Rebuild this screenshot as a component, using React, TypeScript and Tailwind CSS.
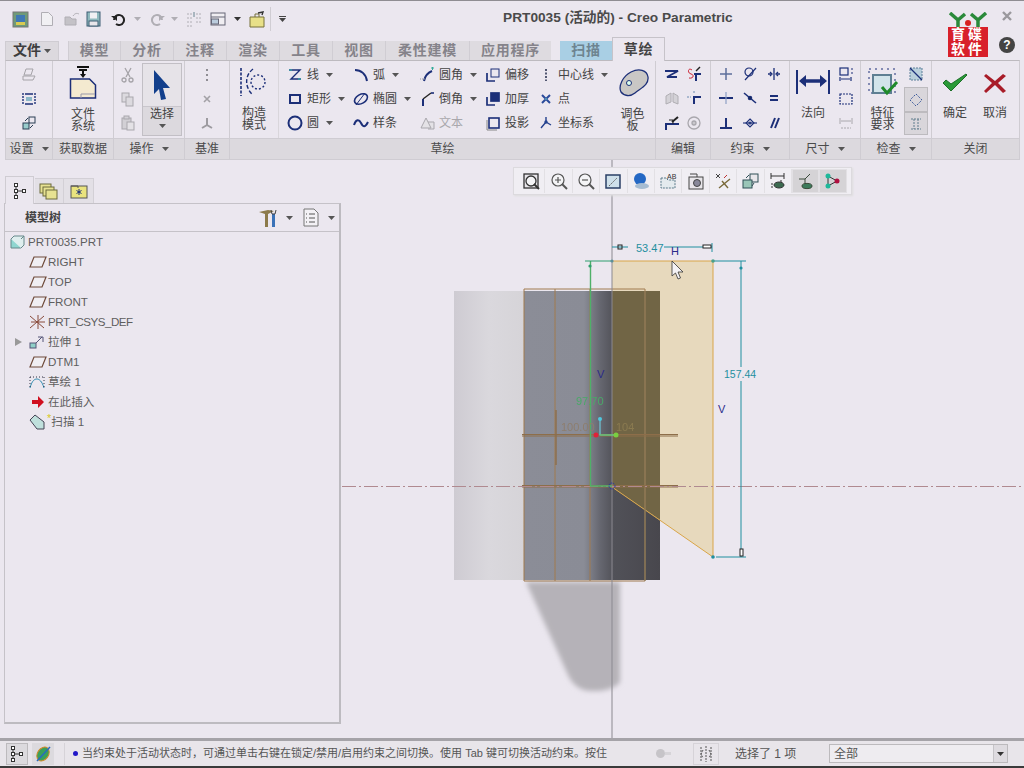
import type { ReactNode } from "react";

const NAVY = "#1c2f78";

function Ic({ w = 16, h = 16, children }: { w?: number; h?: number; children: ReactNode }) {
  return (
    <svg width={w} height={h} viewBox={`0 0 ${w} ${h}`} fill="none" className="shrink-0">
      {children}
    </svg>
  );
}

function Caret({ color = "#555" }: { color?: string }) {
  return (
    <svg width="7" height="4" viewBox="0 0 7 4" className="shrink-0">
      <path d="M0 0h7L3.5 4z" fill={color} />
    </svg>
  );
}

// ribbon icons, small 16x16
const icons: Record<string, ReactNode> = {
  print: <g stroke="#a5a3a8"><path d="M5 2h7l-2 6H3zM2 9h12l-2 4H2z" /></g>,
  fit: <g><path d="M2 2v12M14 2v12" stroke={NAVY} strokeDasharray="2 1" strokeWidth="1.4" /><path d="M4 3h8M4 13h8" stroke={NAVY} strokeWidth="1.4" /><rect x="5" y="6" width="6" height="4" fill="#8cb8c8" /></g>,
  swap: <g stroke="#2a3f55"><rect x="8" y="2" width="6" height="6" /><rect x="2" y="8" width="6" height="6" fill="#9cc" /><path d="M4 6l3-3M12 10l-3 3" /></g>,
  cut: <g stroke="#a5a3a8" strokeWidth="1.3"><path d="M5 1l5 9M11 1L6 10" /><circle cx="4" cy="13" r="2" /><circle cx="11" cy="13" r="2" /></g>,
  copy: <g stroke="#a9a7ad" fill="#dcdadf"><rect x="2" y="2" width="7" height="9" /><rect x="6" y="6" width="7" height="9" /></g>,
  paste: <g stroke="#a9a7ad" fill="#d2d0d5"><rect x="2" y="3" width="9" height="11" /><rect x="7" y="7" width="7" height="8" fill="#e4e2e6" /><rect x="4" y="1" width="5" height="3" /></g>,
  dots: <path d="M8 2v12" stroke="#8f8d93" strokeWidth="2" strokeDasharray="2 3" />,
  xsmall: <path d="M5 5l6 6M11 5l-6 6" stroke="#a3a1a6" strokeWidth="1.6" />,
  axes: <path d="M8 3v7M8 10l5 3M8 10l-5 3" stroke="#9d9ba0" strokeWidth="2" />,
  line: <g stroke={NAVY} strokeWidth="1.4"><path d="M2 3h11L4 12h10" /><path d="M2 3l3 0M14 12l-3 0" stroke="#3a9aa8" /></g>,
  arc: <path d="M2 3c6 0 11 4 12 11" stroke={NAVY} strokeWidth="2" />,
  fillet: <g><path d="M5 14c1-5 3-8 8-10" stroke={NAVY} strokeWidth="2" /><path d="M12 1h3M13.5 0v3" stroke="#3a9" /><path d="M1 12h6" stroke="#999" strokeDasharray="1 1" /></g>,
  rect: <rect x="3" y="4" width="10" height="8" stroke={NAVY} strokeWidth="2" />,
  ellipse: <g><ellipse cx="8" cy="8" rx="7" ry="4.5" transform="rotate(-30 8 8)" stroke={NAVY} strokeWidth="1.6" /><path d="M3 14L12 2" stroke={NAVY} strokeWidth="1" /></g>,
  chamfer: <g><path d="M4 15V8" stroke={NAVY} strokeWidth="2" /><path d="M4 8l8-6" stroke="#222" strokeWidth="1.4" /><path d="M12 2h3" stroke={NAVY} strokeWidth="1.6" /></g>,
  circle: <circle cx="8" cy="8" r="6.5" stroke={NAVY} strokeWidth="2" />,
  spline: <path d="M1 10c2-6 5-6 7-2s4 5 7-1" stroke={NAVY} strokeWidth="2" />,
  text: <g stroke="#a9a7ad"><path d="M2 13l5-10 5 10zM9 7h6v7H9" fill="#e4e2e6" /></g>,
  offset: <g stroke={NAVY} strokeWidth="1.7"><path d="M2 6v8h8" /><rect x="6" y="2" width="8" height="8" strokeWidth="1" /></g>,
  thicken: <g stroke={NAVY} strokeWidth="1.7"><path d="M2 6v8h8" /><rect x="6" y="2" width="8" height="8" fill={NAVY} /></g>,
  project: <g stroke={NAVY}><rect x="4" y="3" width="10" height="10" strokeWidth="1.6" /><path d="M2 5v10h10" stroke="#888" /></g>,
  cline: <path d="M8 2v12" stroke="#222a4a" strokeWidth="1.5" strokeDasharray="2 1.5" />,
  point: <g stroke="#2a4a9a" strokeWidth="2"><path d="M4 4l8 8M12 4l-8 8" /><circle cx="8" cy="8" r="1" fill="#5ab" stroke="none" /></g>,
  csys: <g stroke="#24408e" strokeWidth="1.4"><path d="M8 7L3 13M8 7l5 3M8 7V2" /><circle cx="8" cy="7" r="1" fill="#3ab" /></g>,
  mirror: <g stroke="#b0aeb3" fill="#d4d2d7"><path d="M7 3L2 6v8l5-2zM9 3l5 3v8l-5-2z" /></g>,
  divide: <g stroke={NAVY} strokeWidth="2"><path d="M8 14V7h7" /><path d="M1 7h4M8 1v3" stroke="#6a8ab0" strokeWidth="1" strokeDasharray="2 1" /></g>,
  modify: <g stroke={NAVY} strokeWidth="2"><path d="M2 15v-6h13" /><path d="M14 2L8 7" stroke="#222" /><path d="M5 5h4v4" stroke="#222" strokeWidth="1" /></g>,
  rotate: <g stroke="#a9a7ad" strokeWidth="1.3"><circle cx="8" cy="8" r="6" /><circle cx="8" cy="8" r="2" fill="#c9c7cc" /></g>,
  delseg: <g stroke={NAVY} strokeWidth="1.8"><path d="M1 5h13L3 11h10" /></g>,
  trim: <g><path d="M6 4c-4-3-5 3-1 4s2 5-2 4" stroke="#c23" /><path d="M8 8h7M10 8v7" stroke={NAVY} strokeWidth="2" /><path d="M14 1l-4 4" stroke="#222" strokeWidth="1.5" /></g>,
  vert: <path d="M8 2v12M2 8h12" stroke="#5d6f9c" strokeWidth="1.5" />,
  horz: <g><path d="M1 8h14" stroke={NAVY} strokeWidth="2" /><path d="M8 2v12" stroke="#8ea0c4" strokeWidth="1.2" /></g>,
  perp: <g stroke={NAVY} strokeWidth="2"><path d="M2 13h12M8 3v10" /></g>,
  tangent: <g stroke={NAVY} strokeWidth="1.2"><circle cx="7" cy="6" r="4" /><path d="M3 14L14 2" /></g>,
  mid: <g stroke={NAVY} strokeWidth="1.6"><path d="M2 3l12 10" /><circle cx="8" cy="8" r="1.5" fill="#123" /></g>,
  coin: <g stroke={NAVY} strokeWidth="1.1"><path d="M1 8h14" /><path d="M8 4l4 4-4 4-4-4z" /><circle cx="8" cy="8" r="1" /></g>,
  sym: <g stroke={NAVY} strokeWidth="1.3"><path d="M8 2v12M2 8h3M11 8h3" /><path d="M4 6l2 2-2 2M12 6l-2 2 2 2" /></g>,
  equal: <path d="M4 6h8M4 10h8" stroke={NAVY} strokeWidth="2" />,
  para: <path d="M5 13L9 3M9 13l4-10" stroke={NAVY} strokeWidth="2" />,
  dimA: <g stroke={NAVY} strokeWidth="1.2"><rect x="2" y="1" width="8" height="7" /><path d="M3 12h9M2 10v4M13 10v4M13 2h2M13 6h2" /></g>,
  dimB: <rect x="2" y="3" width="12" height="10" stroke={NAVY} strokeWidth="1.2" strokeDasharray="2 1" />,
  dimC: <g stroke="#aaa8ad" strokeWidth="1"><path d="M2 3v6M14 3v6M3 6h10" /><path d="M3 13h10" strokeDasharray="2 1" /></g>,
  insp1: <g><rect x="2" y="2" width="12" height="12" fill="#b9cfdc" stroke="#5d7f99" strokeDasharray="2 1" /><path d="M2 2l12 12" stroke={NAVY} strokeWidth="1.2" /></g>,
  insp2: <path d="M8 2l6 6-6 6-6-6z" stroke="#3c5a9c" strokeDasharray="2 1.4" />,
  insp3: <g stroke="#5f7d8d"><path d="M3 3h10M3 13h10M6 3v10M10 3v10" strokeDasharray="2 1" /></g>,
};

function Small({ name }: { name: string }) {
  return <Ic>{icons[name]}</Ic>;
}

function IconColumn({ names, className }: { names: string[]; className?: string }) {
  return (
    <div className={`flex flex-col justify-between items-center pt-[6px] pb-[7px] h-full ${className ?? ""}`}>
      {names.map((n) => (
        <Small key={n} name={n} />
      ))}
    </div>
  );
}

function Group({ label, width, caret, children }: { label: string; width: string; caret?: boolean; children?: ReactNode }) {
  return (
    <div className={`flex flex-col border-r border-[#cfccd2] ${width}`}>
      <div className="h-[77px] flex">{children}</div>
      <div className="h-[21px] bg-[#dcd9de] border-t border-[#cfccd2] flex items-center justify-center gap-[8px] text-[12px] text-[#4a4a4a]">
        {label}
        {caret && <Caret />}
      </div>
    </div>
  );
}

function StackedLabel({ lines }: { lines: string[] }) {
  return (
    <div className="text-[12px] leading-[12px] text-center text-[#444]">
      {lines.map((l) => (
        <div key={l}>{l}</div>
      ))}
    </div>
  );
}

function SketchItem({ icon, label, caret, muted }: { icon: string; label: string; caret?: boolean; muted?: boolean }) {
  return (
    <div className="flex items-center h-[16px]">
      <Small name={icon} />
      <span className={`ml-[4px] text-[12px] whitespace-nowrap ${muted ? "text-[#a9a7ac]" : "text-[#444]"}`}>{label}</span>
      {caret && (
        <span className="ml-[7px] flex">
          <Caret />
        </span>
      )}
    </div>
  );
}

function SketchCol({ width, children }: { width: string; children: ReactNode }) {
  return <div className={`flex flex-col justify-between pt-[6px] pb-[7px] ${width}`}>{children}</div>;
}

function TitleBar() {
  const gray = "#b0aeb4";
  return (
    <div className="h-[36px] flex items-center">
      <div className="w-[503px] flex items-center pl-[12px] h-full">
        <Ic w={17} h={17}>
          <rect x="1" y="1" width="15" height="15" fill="#6f9a78" stroke="#777" />
          <rect x="4" y="4" width="9" height="8" fill="#3f78b4" />
          <rect x="4" y="11" width="9" height="3" fill="#d8cb52" />
        </Ic>
        <div className="w-[11px]" />
        <Ic w={14} h={16}>
          <path d="M1.5 1.5h7l4 4v9h-11z" stroke={gray} fill="#f1f0f3" />
        </Ic>
        <div className="w-[10px]" />
        <Ic w={17} h={16}>
          <path d="M1 6h5l2 2h4v6H1z" fill="#c4c2c7" stroke={gray} />
          <path d="M9 5c2-3 4-3 6-2" stroke={gray} />
        </Ic>
        <div className="w-[5px]" />
        <Ic w={15} h={16}>
          <rect x="1" y="1" width="13" height="14" fill="#8fb9bd" stroke="#3e5e74" />
          <rect x="4" y="1.5" width="7" height="6" fill="#f1f0f3" />
          <rect x="3" y="10" width="9" height="5" fill="#e8e6ea" stroke="#3e5e74" />
        </Ic>
        <div className="w-[10px]" />
        <Ic w={16} h={14}>
          <path d="M3 8a5 5 0 1 1 2 4" stroke="#222" strokeWidth="2" />
          <path d="M0 4h6v5z" fill="#222" />
        </Ic>
        <div className="w-[7px]" />
        <Caret color={gray} />
        <div className="w-[8px]" />
        <Ic w={16} h={14}>
          <path d="M13 8a5 5 0 1 0-2 4" stroke={gray} strokeWidth="2" />
          <path d="M16 4h-6v5z" fill={gray} />
        </Ic>
        <div className="w-[6px]" />
        <Caret color={gray} />
        <div className="w-[8px]" />
        <Ic w={16} h={16}>
          <g stroke={gray}>
            <path d="M1 3h5M1 7h5M1 11h5M1 15h5M10 3h5M10 7h5M10 11h5" strokeDasharray="2 1" />
            <path d="M8 6V1" stroke="#67848f" />
          </g>
        </Ic>
        <div className="w-[8px]" />
        <Ic w={16} h={14}>
          <rect x="1" y="1" width="14" height="12" stroke="#667" fill="#f0eef2" />
          <path d="M1 5h14" stroke="#667" />
          <rect x="1.5" y="7" width="7" height="5" fill="#bcd" stroke="#667" />
        </Ic>
        <div className="w-[8px]" />
        <Caret color="#333" />
        <div className="w-[8px]" />
        <Ic w={16} h={17}>
          <path d="M1 6h14v10H1z" fill="#e8e088" stroke="#77703a" />
          <path d="M6 6V3h4v3" stroke="#77703a" />
          <path d="M9 2l5-1-1 3" stroke="#333" strokeWidth="1.4" />
        </Ic>
        <div className="w-[6px] h-[24px] border-r border-[#d0cdd3]" />
        <div className="ml-[8px] flex flex-col items-center gap-[1px]">
          <div className="w-[7px] h-[1px] bg-[#444]" />
          <Caret color="#444" />
        </div>
      </div>
      <div className="text-[13.7px] font-bold text-[#4a4a4a] whitespace-nowrap -mt-[2px]">PRT0035 (活动的) - Creo Parametric</div>
    </div>
  );
}

function Tabs() {
  const tabs = [
    ["模型", "w-[52px]"],
    ["分析", "w-[53px]"],
    ["注释", "w-[53px]"],
    ["渲染", "w-[53px]"],
    ["工具", "w-[53px]"],
    ["视图", "w-[53px]"],
    ["柔性建模", "w-[84px]"],
    ["应用程序", "w-[82px]"],
  ];
  return (
    <div className="h-[23px] flex items-end pl-[5px] relative z-10">
      <div className="w-[54px] h-[19px] pb-[1px] bg-[#dcd9de] border border-b-0 border-[#cfccd2] flex items-center justify-center gap-[3px] text-[14px] font-bold text-[#3e3e3e]">
        文件
        <Caret />
      </div>
      <div className="w-[9px]" />
      <div className="flex h-[19px] bg-[#dedbe0]">
        {tabs.map(([t, w]) => (
          <div key={t} className={`${w} pb-[1px] flex items-center justify-center text-[14px] font-bold tracking-[0.7px] text-[#85838a] border-l border-[#d0cdd3]`}>
            {t}
          </div>
        ))}
      </div>
      <div className="w-[9px]" />
      <div className="w-[52px] h-[19px] pb-[1px] bg-[#a9cfe4] flex items-center justify-center text-[14px] font-bold tracking-[0.7px] text-[#6e8490]">扫描</div>
      <div className="w-[53px] h-[24px] -mb-px bg-[#ebe7ef] border border-b-0 border-[#c6c3c9] flex items-center justify-center text-[14px] font-bold tracking-[0.7px] text-[#444]">草绘</div>
    </div>
  );
}

function Ribbon() {
  return (
    <div className="ml-[5px] w-[1015px] h-[100px] flex border border-[#cfccd2] border-t-[#bdbabf]">
      <Group label="设置" width="w-[47px]" caret>
        <IconColumn names={["print", "fit", "swap"]} className="w-full" />
      </Group>
      <Group label="获取数据" width="w-[61px]">
        <div className="w-full flex flex-col items-center pt-[4px]">
          <Ic w={28} h={34}>
            <path d="M14 5v6M8 2h12M10 5h8" stroke="#111" strokeWidth="2" />
            <path d="M11 9h6l-3 4z" fill="#111" />
            <path d="M1.5 14h19l6 6v13h-25z" fill="#f4ead0" stroke={NAVY} strokeWidth="1.5" />
            <path d="M12 33v-4h14" stroke="#99a" />
          </Ic>
          <div className="mt-[9px]">
            <StackedLabel lines={["文件", "系统"]} />
          </div>
        </div>
      </Group>
      <Group label="操作" width="w-[71px]" caret>
        <IconColumn names={["cut", "copy", "paste"]} className="w-[28px]" />
        <div className="w-[40px] my-[2px] border border-[#c2bfc5] flex flex-col">
          <div className="h-[42px] bg-[#e6e3e8] flex items-center justify-center">
            <Ic w={20} h={32}>
              <path d="M2 1l16 18-7 0 3 11-5 1-2-11-5 5z" fill="#123f8c" />
            </Ic>
          </div>
          <div className="flex-1 bg-[#dcd9de] flex flex-col items-center text-[12px] leading-[14px] text-[#444] border-t border-[#c9c6cc]">
            选择
            <span className="mt-[3px] flex">
              <Caret />
            </span>
          </div>
        </div>
      </Group>
      <Group label="基准" width="w-[45px]">
        <IconColumn names={["dots", "xsmall", "axes"]} className="w-full" />
      </Group>
      <Group label="草绘" width="w-[426px]">
        <div className="w-[49px] flex flex-col items-center pt-[6px] border-r border-[#d9d6db]">
          <Ic w={30} h={30}>
            <path d="M2 1v28" stroke={NAVY} strokeWidth="1.6" strokeDasharray="3 1.5" />
            <path d="M14 2C6 8 5 20 14 28" stroke={NAVY} strokeWidth="1.4" strokeDasharray="4 2" />
            <circle cx="19" cy="15" r="7" stroke={NAVY} strokeWidth="1.4" strokeDasharray="2 2" />
          </Ic>
          <div className="mt-[10px]">
            <StackedLabel lines={["构造", "模式"]} />
          </div>
        </div>
        <div className="w-[8px]" />
        <SketchCol width="w-[66px]">
          <SketchItem icon="line" label="线" caret />
          <SketchItem icon="rect" label="矩形" caret />
          <SketchItem icon="circle" label="圆" caret />
        </SketchCol>
        <SketchCol width="w-[66px]">
          <SketchItem icon="arc" label="弧" caret />
          <SketchItem icon="ellipse" label="椭圆" caret />
          <SketchItem icon="spline" label="样条" />
        </SketchCol>
        <SketchCol width="w-[66px]">
          <SketchItem icon="fillet" label="圆角" caret />
          <SketchItem icon="chamfer" label="倒角" caret />
          <SketchItem icon="text" label="文本" muted />
        </SketchCol>
        <SketchCol width="w-[53px]">
          <SketchItem icon="offset" label="偏移" />
          <SketchItem icon="thicken" label="加厚" />
          <SketchItem icon="project" label="投影" />
        </SketchCol>
        <SketchCol width="w-[72px]">
          <SketchItem icon="cline" label="中心线" caret />
          <SketchItem icon="point" label="点" />
          <SketchItem icon="csys" label="坐标系" />
        </SketchCol>
        <div className="w-[45px] flex flex-col items-center pt-[7px]">
          <Ic w={32} h={30}>
            <path d="M4 24C1 18 6 8 14 4c8-4 16-2 17 5 1 8-7 11-13 16-5 4-11 3-14-1z" fill="#c9c7c5" stroke={NAVY} strokeWidth="1.3" />
            <circle cx="12" cy="15" r="2.5" fill="#dfe" stroke={NAVY} />
          </Ic>
          <div className="mt-[10px]">
            <StackedLabel lines={["调色", "板"]} />
          </div>
        </div>
      </Group>
      <Group label="编辑" width="w-[55px]">
        <div className="w-full grid grid-cols-2 place-items-center pt-[1px] pb-[3px] px-[5px]">
          {["delseg", "trim", "mirror", "divide", "modify", "rotate"].map((n) => (
            <Small key={n} name={n} />
          ))}
        </div>
      </Group>
      <Group label="约束" width="w-[79px]" caret>
        <div className="w-full grid grid-cols-3 place-items-center pt-[1px] pb-[3px] px-[3px]">
          {["vert", "tangent", "sym", "horz", "mid", "equal", "perp", "coin", "para"].map((n) => (
            <Small key={n} name={n} />
          ))}
        </div>
      </Group>
      <Group label="尺寸" width="w-[71px]" caret>
        <div className="w-[46px] flex flex-col items-center pt-[8px]">
          <Ic w={34} h={26}>
            <path d="M1 1v24M33 1v24" stroke={NAVY} strokeWidth="2" />
            <path d="M5 12h24" stroke={NAVY} strokeWidth="3.5" />
            <path d="M3 12l7-6v12zM31 12l-7-6v12z" fill={NAVY} />
          </Ic>
          <div className="mt-[11px] text-[12px] leading-[14px] text-[#444]">法向</div>
        </div>
        <IconColumn names={["dimA", "dimB", "dimC"]} className="w-[20px]" />
      </Group>
      <Group label="检查" width="w-[71px]" caret>
        <div className="w-[43px] flex flex-col items-center pt-[6px]">
          <Ic w={32} h={30}>
            <rect x="2" y="2" width="26" height="24" stroke={NAVY} strokeDasharray="2 4" />
            <rect x="6" y="8" width="18" height="18" stroke="#5e7f92" strokeWidth="2" fill="#d2e4ea" />
            <path d="M15 20l5 6 10-11" stroke="#1f8a2a" strokeWidth="3" />
          </Ic>
          <div className="mt-[10px]">
            <StackedLabel lines={["特征", "要求"]} />
          </div>
        </div>
        <div className="w-[24px] flex flex-col items-center">
          <div className="h-[26px] flex items-center">
            <Small name="insp1" />
          </div>
          <div className="w-[24px] h-[25px] bg-[#d9d6db] border border-[#bdbbbf] flex items-center justify-center">
            <Small name="insp2" />
          </div>
          <div className="w-[24px] h-[23px] bg-[#d9d6db] border border-[#bdbbbf] flex items-center justify-center">
            <Small name="insp3" />
          </div>
        </div>
      </Group>
      <div className="flex flex-col flex-1">
        <div className="h-[77px] flex pl-[8px] gap-[10px]">
          <div className="w-[30px] flex flex-col items-center pt-[12px]">
            <Ic w={26} h={20}>
              <path d="M1 10l8 8L25 2l-1-1L9 11 4 7z" fill="#2a9a38" stroke="#1c6f28" />
            </Ic>
            <div className="mt-[13px] text-[12px] leading-[14px] text-[#444] whitespace-nowrap">确定</div>
          </div>
          <div className="w-[30px] flex flex-col items-center pt-[12px]">
            <Ic w={24} h={20}>
              <path d="M3 1l9 7 8-7 3 2-8 7 8 8-3 2-8-8-9 8-2-2 8-8-8-7z" fill="#a81c28" />
            </Ic>
            <div className="mt-[13px] text-[12px] leading-[14px] text-[#444] whitespace-nowrap">取消</div>
          </div>
        </div>
        <div className="h-[21px] bg-[#dcd9de] border-t border-[#cfccd2] flex items-center justify-center text-[12px] text-[#4a4a4a]">关闭</div>
      </div>
    </div>
  );
}

function TreeTabs() {
  return (
    <div className="h-[28px] flex items-end pl-[5px]">
      <div className="w-[29px] h-[28px] bg-[#ebe7ef] border border-b-0 border-[#cfccd2] relative z-10 -mb-px flex items-center justify-center">
        <TreeGlyph />
      </div>
      <div className="ml-[1px] w-[29px] h-[25px] bg-[#e3e0e6] border-r border-t border-[#d3d0d6] flex items-center justify-center">
        <Ic w={20} h={18}>
          <rect x="1" y="2" width="11" height="9" fill="#e7e292" stroke="#6c6a3c" />
          <rect x="4" y="5" width="11" height="9" fill="#e7e292" stroke="#6c6a3c" />
          <rect x="7" y="8" width="11" height="9" fill="#e7e292" stroke="#6c6a3c" />
        </Ic>
      </div>
      <div className="w-[30px] h-[25px] bg-[#e3e0e6] border-r border-t border-[#d3d0d6] flex items-center justify-center">
        <Ic w={18} h={16}>
          <rect x="1" y="3" width="16" height="12" fill="#e9e37e" stroke="#555" />
          <path d="M1 3h7v2" stroke="#555" />
          <path d="M9 6v6M6.5 7.5l5 3M11.5 7.5l-5 3" stroke={NAVY} />
        </Ic>
      </div>
    </div>
  );
}

function TreeGlyph() {
  return (
    <Ic w={14} h={18}>
      <g stroke="#333" fill="#fff">
        <rect x="1.5" y="1.5" width="3" height="3" />
        <rect x="1.5" y="7.5" width="3" height="3" />
        <rect x="1.5" y="13.5" width="3" height="3" />
        <rect x="9.5" y="7.5" width="3" height="3" />
        <path d="M4.5 9h5M3 4.5v3M3 10.5v3" fill="none" />
      </g>
    </Ic>
  );
}

const plane = (
  <Ic w={18} h={14}>
    <path d="M5 2h12l-4 10H1z" stroke="#6e4a3a" strokeWidth="1.2" fill="#f0eef2" />
  </Ic>
);

function TreeRow({ icon, label, arrow, indent = true }: { icon: ReactNode; label: ReactNode; arrow?: boolean; indent?: boolean }) {
  return (
    <div className={`h-[20px] flex items-center text-[11.6px] text-[#5e5e5e] ${indent ? "pl-[10px]" : "pl-[5px]"}`}>
      {indent && (
        <div className="w-[14px] flex">
          {arrow && <div className="w-0 h-0 border-y-[4px] border-y-transparent border-l-[7px] border-l-[#999]" />}
        </div>
      )}
      <div className={`${indent ? "w-[19px]" : "w-[18px]"} flex items-center`}>{icon}</div>
      {label}
    </div>
  );
}

function TreePanel() {
  return (
    <div className="w-[342px] shrink-0 pt-[15px] pr-[1px]">
      <TreeTabs />
      <div className="ml-[4px] h-[521px] border border-[#c5c2c8] border-r-2 border-b-2 border-r-[#bdbbc0] border-b-[#bdbbc0] flex flex-col">
        <div className="h-[28px] shrink-0 border-b border-[#c5c2c8] flex items-center pl-[20px] pr-[4px]">
          <span className="text-[12px] font-bold text-[#444]">模型树</span>
          <div className="ml-auto flex items-center">
            <Ic w={20} h={20}>
              <path d="M1 4l9-2 6 1-6 3v13H7V6z" fill="#8c7a4a" />
              <path d="M14 6h3v13h-3z" fill="#3a72b8" />
              <path d="M13 2l1 4h3l1-4" stroke="#444" />
            </Ic>
            <div className="ml-[8px] flex">
              <Caret />
            </div>
            <div className="ml-[10px]">
              <Ic w={16} h={19}>
                <path d="M1 1h10l4 4v13H1z" fill="#f3f1f5" stroke="#777" />
                <path d="M3 6h1M3 10h1M3 14h1M6 6h6M6 10h6M6 14h6" stroke="#555" />
              </Ic>
            </div>
            <div className="ml-[9px] flex">
              <Caret />
            </div>
          </div>
        </div>
        <div>
          <TreeRow
            indent={false}
            icon={
              <Ic w={15} h={14}>
                <path d="M1 4h10v9H1z" fill="#8fd6d0" stroke="#66888a" />
                <path d="M1 4l3-3h10v9l-3 3M11 4l3-3" stroke="#66888a" fill="#dfeeee" />
              </Ic>
            }
            label="PRT0035.PRT"
          />
          <TreeRow icon={plane} label="RIGHT" />
          <TreeRow icon={plane} label="TOP" />
          <TreeRow icon={plane} label="FRONT" />
          <TreeRow
            icon={
              <Ic w={18} h={16}>
                <path d="M1 2l14 12M15 2L1 14M9 1v14M2 8h14" stroke="#884a3a" />
              </Ic>
            }
            label={<span className="tracking-[-0.5px]">PRT_CSYS_DEF</span>}
          />
          <TreeRow
            arrow
            icon={
              <Ic w={16} h={14}>
                <rect x="1" y="8" width="6" height="5" fill="#8fd0c8" stroke="#557" />
                <path d="M7 8l6-6M9 2h5v5" stroke="#557" />
              </Ic>
            }
            label="拉伸 1"
          />
          <TreeRow icon={plane} label="DTM1" />
          <TreeRow
            icon={
              <Ic w={16} h={14}>
                <path d="M1 13C3 5 6 4 8 4s5 2 7 9" stroke="#2a8ab0" />
                <path d="M1 2h14M1 2v11M15 2v11" stroke="#334" strokeDasharray="1 2" />
              </Ic>
            }
            label="草绘 1"
          />
          <TreeRow
            icon={
              <span className="pl-[3px] flex">
                <Ic w={12} h={12}>
                  <path d="M0 4h6V0l6 6-6 6V8H0z" fill="#d01020" />
                </Ic>
              </span>
            }
            label="在此插入"
          />
          <TreeRow
            icon={
              <Ic w={18} h={16}>
                <path d="M1 6l5-5 9 7v7H8z" fill="#bfe0dc" stroke="#445" />
              </Ic>
            }
            label={
              <span className="-ml-[1px] flex items-center">
                <span className="text-[#d8c820] text-[11px] leading-none -mt-[6px]">*</span>
                扫描 1
              </span>
            }
          />
        </div>
      </div>
    </div>
  );
}

function FloatGlyph({ i }: { i: number }) {
  const g: ReactNode[] = [
    <g stroke="#333" strokeWidth="1.3"><rect x="2" y="2" width="14" height="14" fill="#e8e6ea" /><circle cx="9" cy="9" r="5" fill="#f4f4f6" /><path d="M12 12l5 5" strokeWidth="2" /></g>,
    <g stroke="#555" strokeWidth="1.2"><circle cx="8" cy="8" r="6" fill="#f4f4f6" /><path d="M8 5v6M5 8h6" /><path d="M12 12l5 5" strokeWidth="2" /></g>,
    <g stroke="#555" strokeWidth="1.2"><circle cx="8" cy="8" r="6" fill="#f4f4f6" /><path d="M5 8h6" /><path d="M12 12l5 5" strokeWidth="2" /></g>,
    <g stroke="#2a3f66"><rect x="2" y="3" width="14" height="13" fill="#cfe0ea" strokeWidth="1.5" /><path d="M5 14L13 6" stroke="#666" strokeDasharray="2 1" /></g>,
    <g><circle cx="8" cy="7" r="6" fill="#2468c4" /><ellipse cx="10" cy="14" rx="7" ry="3" fill="#a6bcd2" /></g>,
    <g stroke="#5a7a8a"><path d="M2 6h5l2 2h7v8H2z" fill="#e4eaee" strokeDasharray="2 1" /><text x="8" y="7" fontSize="7" fill="#333" stroke="none">AB</text></g>,
    <g stroke="#444"><rect x="2" y="5" width="14" height="12" fill="#e8e6ea" /><circle cx="10" cy="11" r="3.5" fill="#889" /><path d="M3 2h7v3" /></g>,
    <g stroke="#444"><path d="M2 2l4 4M6 2L2 6" /><path d="M5 16l11-9M8 9l6 7" stroke="#7a6a3a" strokeWidth="1.4" /><path d="M10 6l3-3" stroke="#b33" /></g>,
    <g stroke="#2f4f56"><rect x="9" y="2" width="8" height="8" fill="#e9e7eb" /><rect x="2" y="8" width="9" height="8" fill="#9ac6b8" /><path d="M5 6l3-3M13 11l-2 3" /></g>,
    <g stroke="#333"><path d="M2 4h13M2 1v6M15 1v6" /><path d="M3 11v5M12 8v3" strokeDasharray="2 1" /><ellipse cx="10" cy="13" rx="5" ry="3" fill="#3c6a50" /></g>,
    <g stroke="#3a4a3a"><path d="M2 7h6M8 7v7M8 7l5-5" /><ellipse cx="10" cy="14" rx="5" ry="2.6" fill="#3c7a5a" /></g>,
    <g><path d="M4 4l9 5-9 5z" stroke="#333" fill="none" /><circle cx="4" cy="4" r="2.5" fill="#1eb89a" /><circle cx="13" cy="9" r="2.5" fill="#b01040" /><circle cx="4" cy="14" r="2.5" fill="#1eb89a" /></g>,
  ];
  return <Ic w={18} h={18}>{g[i]}</Ic>;
}

function FloatingToolbar() {
  return (
    <div className="absolute left-[171px] top-[7px] w-[339px] h-[28px] bg-[#f0eef3] border border-[#dcdade] flex items-center pl-[4px] shadow-[1px_1px_2px_#ddd]">
      {Array.from({ length: 12 }).map((_, i) => (
        <div
          key={i}
          className={`w-[27.4px] h-[24px] flex items-center justify-center border-r border-[#e2e0e4] ${i > 9 ? "bg-[#d5d3d6] border border-[#b9b7bb]" : ""}`}
        >
          <FloatGlyph i={i} />
        </div>
      ))}
    </div>
  );
}

function Canvas() {
  const teal = "#1f8f9f";
  const brown = "#a07a4e";
  return (
    <div className="relative w-[682px]">
      <svg width="682" height="578" viewBox="342 160 682 578" fill="none" className="block">
        <defs>
          <linearGradient id="left" x1="0" x2="1" y1="0" y2="0">
            <stop offset="0" stopColor="#cecbd2" />
            <stop offset="0.5" stopColor="#dad8dd" />
            <stop offset="1" stopColor="#d6d4d8" />
          </linearGradient>
          <linearGradient id="mid" x1="0" x2="1" y1="0" y2="0">
            <stop offset="0" stopColor="#8b8d97" />
            <stop offset="0.44" stopColor="#8a8c96" />
            <stop offset="0.56" stopColor="#666770" />
            <stop offset="0.66" stopColor="#515158" />
            <stop offset="1" stopColor="#48474d" />
          </linearGradient>
          <filter id="soft">
            <feGaussianBlur stdDeviation="2.5" />
          </filter>
          <filter id="glow">
            <feGaussianBlur stdDeviation="0.5" />
          </filter>
        </defs>

        <path d="M526 582H620V682Q612 692 590 691Q575 690 568 675Z" fill="#b5b2b8" filter="url(#soft)" />
        <rect x="454" y="291" width="70" height="289" fill="url(#left)" />
        <rect x="524" y="291" width="136" height="289" fill="url(#mid)" />

        <path d="M612 261H713V557L612 487Z" fill="#e7d9bd" />
        <path d="M612 291H660V520L612 487Z" fill="#716545" />
        <path d="M612 261H713V557L612 487" stroke="#d9a548" />

        <path d="M524 289H645V581H524Z" stroke={brown} />
        <path d="M555 289V581M590 289V581" stroke={brown} />
        <path d="M645 291V581" stroke="#8a7a5a" />
        <path d="M522 434.5H678M522 436H678M522 485.5H678M522 487H678" stroke="#8d6e4a" />
        <path d="M556 410V465" stroke="#8d6e4a" strokeWidth="1.4" />

        <path d="M612 160V738" stroke="#8b8990" />
        <path d="M342 486.5H1024" stroke="#b08a90" strokeDasharray="14 3 2 3" />
        <path d="M590.5 261V486H612" stroke="#4fb068" strokeWidth="1.4" />
        <path d="M585 261H612" stroke="#2e9e6e" />
        <path d="M713 261H746" stroke={teal} />
        <path d="M741 261V557M716 557H746" stroke={teal} />
        <path d="M612 247H628M664 247H712M712 243V252" stroke={teal} />
        <rect x="618" y="245" width="4" height="4" stroke="#222" />
        <rect x="703" y="245" width="8" height="3" fill="#fff" stroke="#222" />
        <rect x="740" y="549" width="3" height="7" fill="#fff" stroke="#222" />
        <circle cx="590" cy="266" r="1.6" fill="#2e9e6e" />
        <circle cx="741" cy="268" r="1.6" fill={teal} />
        <circle cx="612" cy="261" r="1.6" fill="#5c8f9a" />
        <circle cx="713" cy="261" r="1.8" fill="#4ba08c" />
        <circle cx="713" cy="557" r="1.8" fill={teal} />
        <circle cx="612" cy="486" r="3" stroke="#2233aa" strokeDasharray="1.5 1" />

        <g fontFamily="'Liberation Sans', sans-serif" fontSize="11">
          <text x="636" y="252" fill={teal}>53.47</text>
          <text x="671" y="255" fill="#2a2a8a">H</text>
          <rect x="723" y="367" width="34" height="14" fill="#ebe7ef" />
          <text x="724" y="378" fill={teal} fontSize="10.5">157.44</text>
          <text x="718" y="413" fill="#2a2a8a">V</text>
          <text x="597" y="378" fill="#2a2a8a">V</text>
          <text x="576" y="405" fill="#4aa868" filter="url(#glow)">97.70</text>
          <text x="561" y="431" fill="#8d7e6e" filter="url(#glow)">100.00</text>
          <text x="616" y="431" fill="#8a7a50" filter="url(#glow)">104</text>
        </g>

        <path d="M600 419V435H616" stroke="#6fc6d8" strokeWidth="1.2" />
        <path d="M600 435H616" stroke="#6ac25a" strokeWidth="1.2" />
        <circle cx="600" cy="419" r="2" fill="#4fc8e0" />
        <circle cx="596" cy="435" r="2.5" fill="#e0203a" />
        <circle cx="616" cy="435" r="2.5" fill="#7ad040" />

        <path d="M672 261V276L675.5 273L678 279L680.5 278L678 272L683 272Z" fill="#f4f2f5" stroke="#333" strokeWidth="0.8" />
      </svg>
      <FloatingToolbar />
    </div>
  );
}

function StatusBar() {
  return (
    <div className="h-[30px] border-t-[3px] border-[#a5a3a8] border-b-2 border-b-[#3a3a3a] bg-[#e8e5ea] flex items-center text-[12px] text-[#555]">
      <div className="ml-[6px] w-[22px] h-[22px] bg-[#dcdade] border border-[#bcbabd] flex items-center justify-center">
        <TreeGlyph />
      </div>
      <div className="ml-[4px] w-[22px] h-[22px] bg-[#dcdade] flex items-center justify-center">
        <Ic w={18} h={18}>
          <ellipse cx="9" cy="9" rx="5.5" ry="7.5" transform="rotate(35 9 9)" fill="#3aa05a" stroke="#d08a2a" />
          <path d="M3 16L16 2" stroke="#2a6ac0" strokeWidth="1.5" />
        </Ic>
      </div>
      <div className="ml-[10px] w-[1px] h-[22px] bg-[#d6d3d8]" />
      <div className="ml-[8px] w-[5px] h-[5px] rounded-full bg-[#2218c8]" />
      <div className="ml-[4px] w-[530px] text-[11px] whitespace-nowrap">当约束处于活动状态时，可通过单击右键在锁定/禁用/启用约束之间切换。使用 Tab 键可切换活动约束。按住</div>
      <div className="ml-[44px] flex items-center w-[37px]">
        <div className="w-[9px] h-[9px] rounded-full bg-[#c6c4c8]" />
        <div className="w-[6px] h-[3px] bg-[#d6d4d8]" />
      </div>
      <div className="w-[26px] h-[22px] border border-[#d6d3d8] flex items-center justify-center">
        <Ic w={16} h={18}>
          <path d="M3 2v14M8 1v16M13 2v14M5 5l-2 4 2 4M11 5l2 4-2 4" stroke="#555" strokeDasharray="2 1" />
        </Ic>
      </div>
      <div className="ml-[16px] w-[94px] whitespace-nowrap">选择了 1 项</div>
      <div className="w-[179px] h-[19px] bg-[#eeecf0] border border-[#bcbabd] flex items-center pl-[4px]">
        全部
        <div className="ml-auto h-full w-[14px] bg-[#dedbe0] border-l border-[#c6c4c8] flex items-center justify-center">
          <Caret color="#333" />
        </div>
      </div>
    </div>
  );
}

export default function App() {
  return (
    <div className="relative w-[1024px] h-[768px] overflow-hidden bg-[#ebe7ef] border-t border-[#8f8d92] font-['Liberation_Sans','Noto_Sans_CJK_SC',sans-serif]">
      <TitleBar />
      <Tabs />
      <Ribbon />
      <div className="flex h-[578px]">
        <TreePanel />
        <Canvas />
      </div>
      <StatusBar />

      {/* window buttons and watermark sit over the title bar */}
      <div className="absolute left-[1001px] top-[9px]">
        <Ic w={12} h={12}>
          <path d="M2 2l8 8M10 2l-8 8" stroke="#9a989d" strokeWidth="2.4" />
        </Ic>
      </div>
      <div className="absolute left-[999px] top-[36px] w-[16px] h-[16px] rounded-full bg-[#444] text-white text-[12px] font-bold leading-[16px] text-center">?</div>
      <div className="absolute left-[948px] top-[11px] w-[40px]">
        <Ic w={40} h={15}>
          <path d="M2 1l8 7 7-6M23 2l7 6 8-7M10 8v7M30 8v7" stroke="#2a8a3a" strokeWidth="3.5" />
          <circle cx="20" cy="11" r="3" fill="#d82020" />
        </Ic>
        <div className="h-[30px] bg-[#d8202a] text-white text-[14px] font-bold leading-[15px] tracking-[3px] pl-[3px] whitespace-nowrap">
          <div>育碟</div>
          <div>软件</div>
        </div>
      </div>
    </div>
  );
}
